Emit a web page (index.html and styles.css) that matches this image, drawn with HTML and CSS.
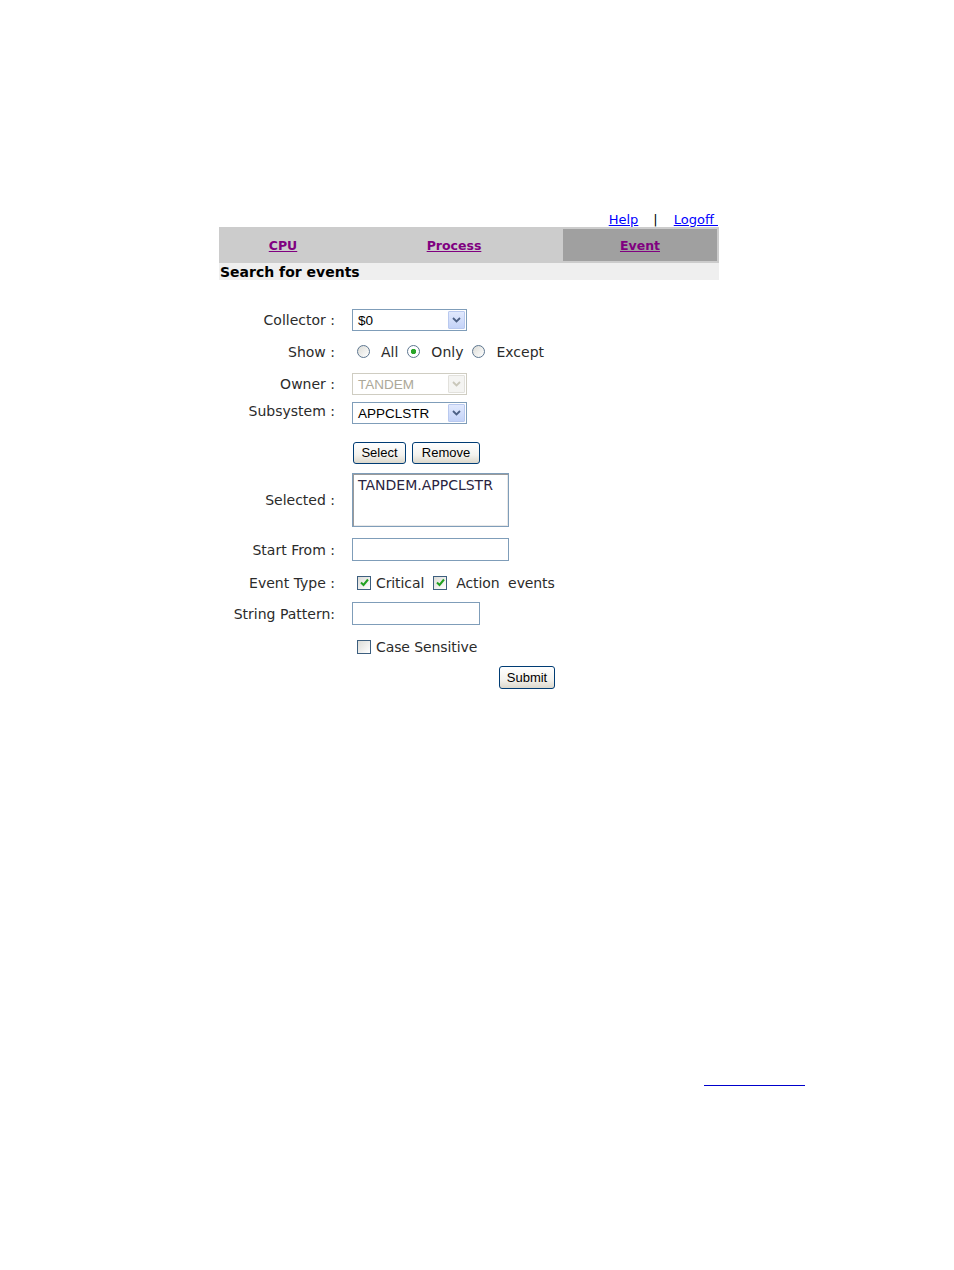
FILE: index.html
```html
<!DOCTYPE html>
<html>
<head>
<meta charset="utf-8">
<title>Search for events</title>
<link rel="stylesheet" href="styles.css">
</head>
<body>
<div class="page">
  <div class="toplinks">
    <a href="#" class="toplink">Help</a>
    <span class="sep">|</span>
    <a href="#" class="toplink">Logoff&nbsp;</a>
  </div>
  <div class="nav">
    <div class="navcell cpu"><a href="#">CPU</a></div>
    <div class="navcell process"><a href="#">Process</a></div>
    <div class="navcell event active"><a href="#">Event</a></div>
  </div>
  <div class="title">Search for events</div>

  <div class="form">
    <div class="row r1">
      <div class="label">Collector :</div>
      <div class="ctl">
        <div class="select"><span class="sel-text">$0</span><span class="arrow"><svg width="9" height="6" viewBox="0 0 9 6"><polyline points="1,1 4.5,4.5 8,1" fill="none" stroke="#4d6185" stroke-width="1.8"/></svg></span></div>
      </div>
    </div>
    <div class="row r2">
      <div class="label">Show :</div>
      <div class="ctl">
        <span class="radio"></span><span class="opt">All</span>
        <span class="radio checked"></span><span class="opt">Only</span>
        <span class="radio"></span><span class="opt">Except</span>
      </div>
    </div>
    <div class="row r3">
      <div class="label">Owner :</div>
      <div class="ctl">
        <div class="select disabled"><span class="sel-text">TANDEM</span><span class="arrow"><svg width="9" height="6" viewBox="0 0 9 6"><polyline points="1,1 4.5,4.5 8,1" fill="none" stroke="#c9c7ba" stroke-width="1.8"/></svg></span></div>
      </div>
    </div>
    <div class="row r4">
      <div class="label sub">Subsystem :</div>
      <div class="ctl">
        <div class="select"><span class="sel-text">APPCLSTR</span><span class="arrow"><svg width="9" height="6" viewBox="0 0 9 6"><polyline points="1,1 4.5,4.5 8,1" fill="none" stroke="#4d6185" stroke-width="1.8"/></svg></span></div>
      </div>
    </div>
    <div class="row r5">
      <div class="label"></div>
      <div class="ctl">
        <button class="btn btn-select">Select</button>
        <button class="btn btn-remove">Remove</button>
      </div>
    </div>
    <div class="row r6">
      <div class="label">Selected :</div>
      <div class="ctl">
        <div class="textarea">TANDEM.APPCLSTR</div>
      </div>
    </div>
    <div class="row r7">
      <div class="label">Start From :</div>
      <div class="ctl">
        <div class="input wide"></div>
      </div>
    </div>
    <div class="row r8">
      <div class="label">Event Type :</div>
      <div class="ctl">
        <span class="check checked"><svg width="11" height="11" viewBox="0 0 11 11"><polyline points="2,5.5 4.5,8 9,2.5" fill="none" stroke="#21a121" stroke-width="2"/></svg></span><span class="copt">Critical</span>
        <span class="check checked second"><svg width="11" height="11" viewBox="0 0 11 11"><polyline points="2,5.5 4.5,8 9,2.5" fill="none" stroke="#21a121" stroke-width="2"/></svg></span><span class="copt action">Action&nbsp; events</span>
      </div>
    </div>
    <div class="row r9">
      <div class="label">String Pattern:</div>
      <div class="ctl">
        <div class="input narrow"></div>
      </div>
    </div>
    <div class="row r10">
      <div class="label"></div>
      <div class="ctl">
        <span class="check"></span><span class="copt">Case Sensitive</span>
      </div>
    </div>
    <div class="row r11">
      <div class="label"></div>
      <div class="ctl">
        <button class="btn btn-submit">Submit</button>
      </div>
    </div>
  </div>
</div>
<div class="footline"></div>
</body>
</html>
```
FILE: styles.css
```css
html, body {
  margin: 0;
  padding: 0;
  background: #ffffff;
}

body {
  font-family: "DejaVu Sans", Verdana, sans-serif;
  color: #2b2b2b;
}

.page {
  width: 500px;
  margin-left: 219px;
  padding-top: 213px;
}

.toplinks {
  display: flex;
  justify-content: flex-end;
  align-items: center;
  height: 14px;
  font-size: 13px;
  line-height: 14px;
  padding-right: 1px;
}

.toplink {
  color: #0000ff;
  text-decoration: underline;
}

.sep {
  color: #000;
  margin: 0 16px 0 15px;
}

.nav {
  display: flex;
  gap: 2px;
  height: 36px;
  padding: 2px;
  box-sizing: border-box;
  background: #cccccc;
}

.navcell {
  display: flex;
  align-items: center;
  justify-content: center;
  background: #cccccc;
  font-size: 12.5px;
  font-weight: bold;
  padding-top: 1px;
}

.navcell a {
  color: #800080;
  text-decoration: underline;
}

.cpu { width: 124px; }
.process { width: 214px; }
.event { width: 154px; }
.navcell.active { background: #a0a0a0; }

.title {
  height: 17px;
  box-sizing: border-box;
  padding-top: 1px;
  line-height: 17px;
  background: #efefef;
  font-size: 14px;
  font-weight: bold;
  color: #000;
  padding-left: 1px;
  overflow: visible;
}

.form {
  display: flex;
  flex-direction: column;
}

.row {
  display: flex;
  align-items: center;
}

.label {
  width: 116px;
  flex: none;
  text-align: right;
  font-size: 14px;
  line-height: 16px;
  white-space: nowrap;
}

.label.sub { margin-top: -5px; }

.ctl {
  margin-left: 17px;
  display: flex;
  align-items: center;
  font-size: 14px;
}

.r1 { margin-top: 29px; height: 22px; }
.r2 { margin-top: 10px; height: 21px; }
.r3 { margin-top: 11px; height: 22px; }
.r4 { margin-top: 7px; height: 22px; }
.r5 { margin-top: 18px; height: 22px; }
.r6 { margin-top: 9px; height: 54px; }
.r7 { margin-top: 11px; height: 23px; }
.r8 { margin-top: 11px; height: 21px; }
.r9 { margin-top: 9px; height: 23px; }
.r10 { margin-top: 11px; height: 21px; }
.r11 { margin-top: 9px; height: 23px; }

/* select boxes */
.select {
  width: 115px;
  height: 22px;
  box-sizing: border-box;
  border: 1px solid #7f9db9;
  background: #fff;
  display: flex;
  align-items: center;
  justify-content: space-between;
  font-family: "Liberation Sans", Arial, sans-serif;
  font-size: 13.5px;
  color: #000;
}

.sel-text {
  padding-left: 5px;
}

.arrow {
  width: 17px;
  height: 18px;
  box-sizing: border-box;
  margin-right: 1px;
  border: 1px solid #b9c9ef;
  border-radius: 1px;
  background: linear-gradient(#e1e9fd, #c4d3f8);
  display: flex;
  align-items: center;
  justify-content: center;
}

.select.disabled {
  border-color: #cfcdc2;
  color: #aca899;
}

.select.disabled .arrow {
  border-color: #e2e1dc;
  background: #f4f4f2;
}

/* radios */
.radio {
  width: 13px;
  height: 13px;
  box-sizing: border-box;
  border: 1px solid #5d7690;
  border-radius: 50%;
  background: linear-gradient(135deg, #dcdcd7, #ffffff);
  margin-left: 5px;
  flex: none;
}

.radio.checked {
  background: radial-gradient(circle, #2aa52a 0, #2aa52a 2.4px, #ffffff 3px);
}

.opt {
  margin-left: 11px;
  margin-right: 5px;
}

.opt + .radio { margin-left: 4px; }

/* checkboxes */
.check {
  width: 14px;
  height: 14px;
  box-sizing: border-box;
  border: 1px solid #3d5f7f;
  background: linear-gradient(135deg, #dcdcd7, #ffffff);
  margin-left: 5px;
  flex: none;
  display: flex;
  align-items: center;
  justify-content: center;
}

.check.second { margin-left: 9px; }

.copt { margin-left: 5px; letter-spacing: -0.1px; }
.copt.action { margin-left: 9px; }

/* buttons */
.btn {
  font-family: "Liberation Sans", Arial, sans-serif;
  font-size: 13px;
  color: #000;
  height: 22px;
  box-sizing: border-box;
  border: 1px solid #003c74;
  border-radius: 3px;
  background: linear-gradient(#ffffff, #f3f2ee 60%, #dcd8cc);
  padding: 0;
  margin: 0;
  line-height: 18px;
}

.btn-select { width: 53px; margin-left: 1px; }
.btn-remove { width: 68px; margin-left: 6px; }
.btn-submit { width: 56px; height: 23px; margin-left: 147px; }

/* text fields */
.textarea {
  width: 157px;
  height: 54px;
  box-sizing: border-box;
  border: 1px solid #7f9db9;
  box-shadow: inset 1px 1px 0 #9a9a9a, inset -1px -1px 0 #e8e8e8;
  padding: 3px 5px;
  font-size: 14px;
  line-height: 17px;
  color: #2a2440;
  white-space: nowrap;
}

.input {
  height: 23px;
  box-sizing: border-box;
  border: 1px solid #7f9db9;
  background: #fff;
}

.input.wide { width: 157px; }
.input.narrow { width: 128px; }

.footline {
  width: 101px;
  margin-left: 704px;
  margin-top: 396px;
  border-top: 1px solid #0000cc;
}
```
